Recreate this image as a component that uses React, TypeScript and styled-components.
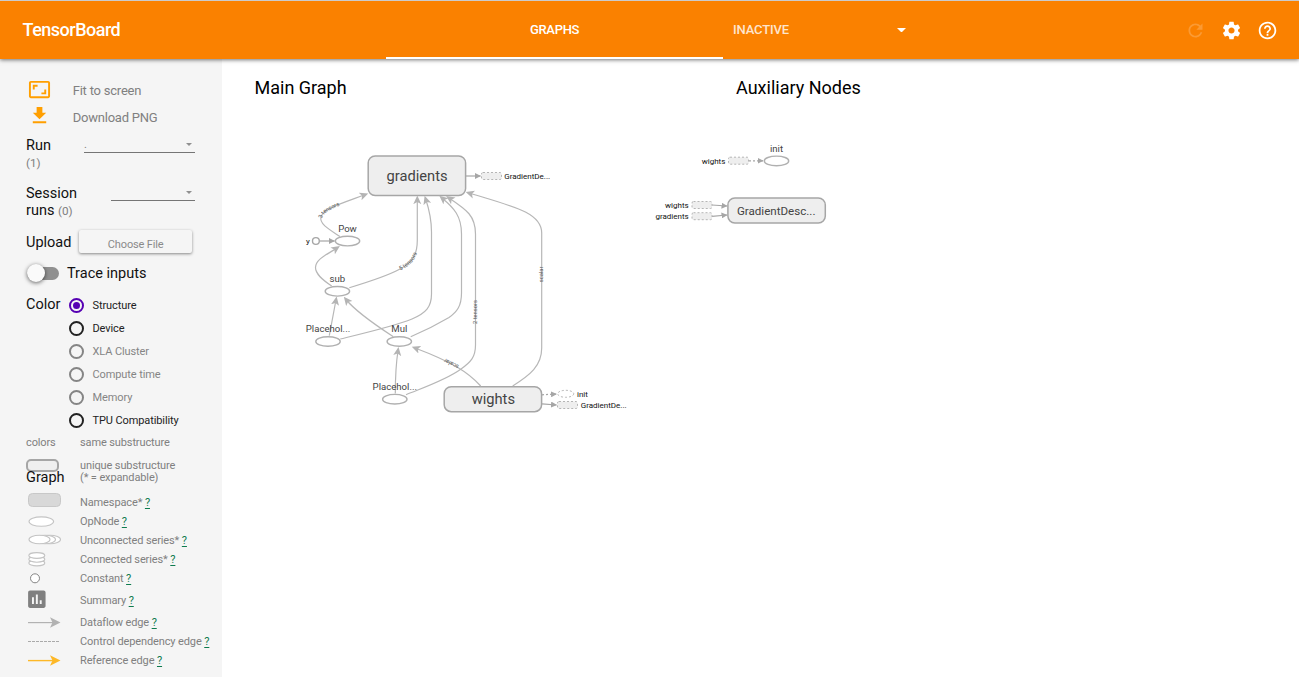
import React from "react";
import styled, { createGlobalStyle } from "styled-components";

const Global = createGlobalStyle`
  * { box-sizing: border-box; }
  body { margin: 0; font-family: Roboto, sans-serif; background: #fff; overflow: hidden; }
`;

const Page = styled.div`
  display: flex;
  flex-direction: column;
  width: 1299px;
  height: 677px;
`;

const Toolbar = styled.header`
  position: relative;
  z-index: 2;
  display: flex;
  flex: none;
  height: 59px;
  border-top: 1px solid #cbcbcb;
  background: #fa8100;
  color: #fff;
  box-shadow: 0 1px 4px rgba(0, 0, 0, 0.55);
`;

const Brand = styled.div`
  width: 386px;
  padding-left: 22.5px;
  font-size: 18px;
  font-weight: 500;
  letter-spacing: -0.5px;
  line-height: 58px;
`;

const Tab = styled.div`
  width: 337px;
  height: 58px;
  border-bottom: 2px solid #fff;
  font-size: 13px;
  font-weight: 500;
  letter-spacing: -0.3px;
  line-height: 58px;
  text-align: center;
`;

const Inactive = styled.div`
  display: flex;
  align-items: center;
  justify-content: space-between;
  width: 173px;
  margin-left: 10px;
  font-size: 13px;
  font-weight: 500;
  letter-spacing: -0.15px;
  & > span { margin-top: -1px; opacity: 0.8; }
`;

const Actions = styled.div`
  display: flex;
  align-items: center;
  gap: 15px;
  margin-left: auto;
  padding-right: 21px;
`;

const Body = styled.div`
  display: flex;
  flex: 1;
  min-height: 0;
`;

const Sidebar = styled.aside`
  flex: none;
  width: 222px;
  padding: 18px 0 0 26px;
  background: #f5f5f5;
  color: #111;
`;

const ActionRow = styled.div`
  display: flex;
  align-items: center;
  height: 27px;
  font-size: 13px;
  letter-spacing: -0.22px;
  color: #808080;
`;

const ActionIcon = styled.span<{ $shift?: number }>`
  display: flex;
  width: 46.7px;
  padding-left: 2px;
  margin-top: ${(p) => p.$shift ?? 0}px;
`;

const Field = styled.div<{ $h: number }>`
  display: flex;
  align-items: flex-start;
  justify-content: space-between;
  height: ${(p) => p.$h}px;
  padding-right: 27px;
  font-size: 14.5px;
`;

const FieldLabel = styled.div`
  padding-top: 6px;
  line-height: 17px;
`;

const Count = styled.span`
  font-size: 11.7px;
  color: #808080;
`;

const Select = styled.div<{ $w: number }>`
  display: flex;
  justify-content: space-between;
  align-items: center;
  width: ${(p) => p.$w}px;
  height: 22px;
  padding: 6px 3px 0 0;
  border-bottom: 1px solid #757575;
  font-size: 11px;
  color: #808080;
`;

const UploadRow = styled.div`
  display: flex;
  align-items: center;
  height: 24px;
  margin-top: 3px;
  font-size: 14.5px;
`;

const FileButton = styled.div`
  width: 113.5px;
  height: 23px;
  margin: -2px 0 0 7.5px;
  border-radius: 2px;
  background: #f5f5f5;
  box-shadow: 0 1px 3px rgba(0, 0, 0, 0.45);
  font-size: 11px;
  letter-spacing: -0.15px;
  line-height: 30px;
  text-align: center;
  color: #8a8a8a;
`;

const ToggleRow = styled.div`
  display: flex;
  align-items: center;
  height: 38px;
  font-size: 14.5px;
`;

const Track = styled.div`
  display: flex;
  align-items: center;
  width: 32px;
  height: 13px;
  margin: 0 8px 0 1px;
  border-radius: 7px;
  background: #909090;
`;

const Knob = styled.div`
  flex: none;
  width: 18px;
  height: 18px;
  border-radius: 50%;
  background: #fafafa;
  box-shadow: 0 1px 4px rgba(0, 0, 0, 0.6);
`;

const ColorRow = styled.div`
  display: flex;
  margin-top: 1px;
  font-size: 14.5px;
`;

const ColorLabel = styled.div`
  width: 43px;
  line-height: 23px;
`;

const Radios = styled.div`
  padding-top: 1px;
`;

const Radio = styled.div<{ $off?: boolean }>`
  display: flex;
  align-items: center;
  gap: 8.5px;
  height: 23px;
  font-size: 11px;
  letter-spacing: -0.1px;
  color: ${(p) => (p.$off ? "#858585" : "#222")};
`;

const Ring = styled.span<{ $on?: boolean }>`
  display: flex;
  align-items: center;
  justify-content: center;
  width: 15px;
  height: 15px;
  border: 2px solid ${(p) => (p.$on ? "#5600b3" : "currentColor")};
  border-radius: 50%;
`;

const Dot = styled.span`
  width: 7px;
  height: 7px;
  border-radius: 50%;
  background: #5600b3;
`;

const Note = styled.div<{ $h: number; $top?: number }>`
  display: flex;
  height: ${(p) => p.$h}px;
  padding-top: ${(p) => p.$top ?? 0}px;
  font-size: 11px;
  letter-spacing: -0.12px;
  line-height: 12px;
  color: #808080;
`;

const Cell = styled.div`
  flex: none;
  width: 54px;
`;

const NoteText = styled.div`
  padding-top: 1px;
`;

const Swatch = styled.div`
  width: 33px;
  height: 13px;
  border: 2px solid #a6a6a6;
  border-radius: 5px;
  background: #efefef;
`;

const GraphHeading = styled.div`
  margin-top: -2px;
  font-size: 14.5px;
  line-height: 16px;
  letter-spacing: 0;
  color: #111;
`;

const LegendRow = styled.div<{ $h: number }>`
  display: flex;
  align-items: center;
  height: ${(p) => p.$h}px;
  font-size: 11px;
  letter-spacing: -0.12px;
  color: #808080;
  white-space: pre;
  & > svg { flex: none; margin-right: 18px; }
`;

const Help = styled.span`
  color: #0d7a4d;
  text-decoration: underline;
  text-underline-offset: 2px;
`;

const Main = styled.main`
  display: flex;
  flex-direction: column;
  flex: 1;
`;

const Titles = styled.div`
  display: flex;
  flex: none;
  height: 59px;
  padding-left: 32.5px;
  font-size: 18px;
  line-height: 58px;
  color: #000;
`;

const Title = styled.div<{ $w?: number }>`
  width: ${(p) => (p.$w ? `${p.$w}px` : "auto")};
`;

const Canvas = styled.svg`
  display: block;
  flex: none;
  font-family: Roboto, sans-serif;
  text { text-anchor: middle; fill: #444; }
  .small { font-size: 8px; fill: #111; text-anchor: start; }
  .end { text-anchor: end; }
  .edgeText { font-size: 5.8px; fill: #555; }
`;

const Caret = ({ w = 9, color = "#fff" }: { w?: number; color?: string }) => (
  <svg width={w} height={w / 2} viewBox="0 0 10 5"><path d="M0 0h10L5 5z" fill={color} /></svg>
);

const Icon = ({ d, size = 22, fill = "#fff", opacity = 1 }: { d: string; size?: number; fill?: string; opacity?: number }) => (
  <svg width={size} height={size} viewBox="0 0 24 24" fill={fill} opacity={opacity}><path d={d} /></svg>
);

const REFRESH = "M17.65 6.35C16.2 4.9 14.21 4 12 4c-4.42 0-7.99 3.58-7.99 8s3.57 8 7.99 8c3.73 0 6.84-2.55 7.73-6h-2.08c-.82 2.33-3.04 4-5.65 4-3.31 0-6-2.69-6-6s2.69-6 6-6c1.66 0 3.14.69 4.22 1.78L13 11h7V4l-2.35 2.35z";
const SETTINGS = "M19.43 12.98c.04-.32.07-.64.07-.98s-.03-.66-.07-.98l2.11-1.65c.19-.15.24-.42.12-.64l-2-3.46c-.12-.22-.39-.3-.61-.22l-2.49 1c-.52-.4-1.08-.73-1.69-.98l-.38-2.65C14.46 2.18 14.25 2 14 2h-4c-.25 0-.46.18-.49.42l-.38 2.65c-.61.25-1.17.59-1.69.98l-2.49-1c-.23-.09-.49 0-.61.22l-2 3.46c-.13.22-.07.49.12.64l2.11 1.65c-.04.32-.07.65-.07.98s.03.66.07.98l-2.11 1.65c-.19.15-.24.42-.12.64l2 3.46c.12.22.39.3.61.22l2.49-1c.52.4 1.08.73 1.69.98l.38 2.65c.03.24.24.42.49.42h4c.25 0 .46-.18.49-.42l.38-2.65c.61-.25 1.17-.59 1.69-.98l2.49 1c.23.09.49 0 .61-.22l2-3.46c.12-.22.07-.49-.12-.64l-2.11-1.65zM12 15.5c-1.93 0-3.5-1.57-3.5-3.5s1.57-3.5 3.5-3.5 3.5 1.57 3.5 3.5-1.57 3.5-3.5 3.5z";
const HELP = "M11 18h2v-2h-2v2zm1-16C6.48 2 2 6.48 2 12s4.48 10 10 10 10-4.48 10-10S17.52 2 12 2zm0 18c-4.41 0-8-3.59-8-8s3.59-8 8-8 8 3.59 8 8-3.59 8-8 8zm0-14c-2.21 0-4 1.79-4 4h2c0-1.1.9-2 2-2s2 .9 2 2c0 2-3 1.75-3 5h2c0-2.25 3-2.5 3-5 0-2.21-1.79-4-4-4z";
const FIT = "M19 12h-2v3h-3v2h5v-5zM7 9h3V7H5v5h2V9zm14-6H3c-1.1 0-2 .9-2 2v14c0 1.1.9 2 2 2h18c1.1 0 2-.9 2-2V5c0-1.1-.9-2-2-2zm0 16.01H3V4.99h18v14.02z";
const DOWNLOAD = "M19 9h-4V3H9v6H5l7 7 7-7zM5 18v2h14v-2H5z";
const SUMMARY = "M19 3H5c-1.1 0-2 .9-2 2v14c0 1.1.9 2 2 2h14c1.1 0 2-.9 2-2V5c0-1.1-.9-2-2-2zM9 17H7v-7h2v7zm4 0h-2V7h2v10zm4 0h-2v-4h2v4z";

const radios = [
  { label: "Structure", on: true },
  { label: "Device" },
  { label: "XLA Cluster", off: true },
  { label: "Compute time", off: true },
  { label: "Memory", off: true },
  { label: "TPU Compatibility" },
];

const legendStroke = { fill: "#fff", stroke: "#c4c4c4", strokeWidth: 1.1 };

const legend: { h: number; label: string; art: React.ReactNode }[] = [
  { h: 19, label: "Namespace*", art: <rect x="2.5" y="0.5" width="32" height="13" rx="4" fill="#d8d8d8" stroke="#c8c8c8" /> },
  { h: 19, label: "OpNode", art: <ellipse cx="15.3" cy="9.6" rx="12.3" ry="4.7" {...legendStroke} /> },
  { h: 19, label: "Unconnected series*", art: <g {...legendStroke}><ellipse cx="24" cy="8.5" rx="10.5" ry="4.2" /><ellipse cx="19" cy="8.5" rx="10.5" ry="4.2" /><ellipse cx="13.5" cy="8.5" rx="10.5" ry="4.2" /></g> },
  { h: 19, label: "Connected series*", art: <g {...legendStroke}><ellipse cx="10.8" cy="13" rx="8" ry="2.9" /><ellipse cx="10.8" cy="9.3" rx="8" ry="2.9" /><ellipse cx="10.8" cy="5.5" rx="8" ry="2.9" /></g> },
  { h: 19, label: "Constant", art: <circle cx="9" cy="9.3" r="4.5" fill="#fff" stroke="#858585" /> },
  { h: 25, label: "Summary", art: <path transform="translate(-.8 -3.4) scale(.97)" fill="#808080" d={SUMMARY} /> },
  { h: 19, label: "Dataflow edge", art: <g fill="#b2b2b2"><path d="M2 9h26v1.2H2z" /><path d="M34.5 9.5l-10.5-5.3 2.5 5.3-2.5 5.3z" /></g> },
  { h: 19, label: "Control dependency edge", art: <path d="M2 9.5h32" stroke="#aaa" strokeDasharray="3 1" /> },
  { h: 19, label: "Reference edge", art: <g fill="#fdb827"><path d="M2 8.9h26v1.4H2z" /><path d="M34.5 9.5l-10.5-5.3 2.5 5.3-2.5 5.3z" /></g> },
];

const edges: { d: string; text?: string; at?: string }[] = [
  { d: "M340 236.5C330 230 319 224 321 217C323 209 337 205 365 194.7", text: "3 tensors", at: "50%" },
  { d: "M331.7 286C322 279.5 315.5 274 315.5 267.5C315.5 259 328 254 337 248" },
  { d: "M349.3 287.7C370 281.5 389 275 400 269C413 262.5 417.3 254 417.3 240V199", text: "5 tensors", at: "50%" },
  { d: "M340.3 339C365 333 395 326 412 319C426 313 431.5 307 431.5 294V232C431.5 219 429 209 425.7 199" },
  { d: "M410.7 336.7C422 332 438 324 449 317.5C457 312 461.5 306 461.5 293V234C461.5 216 454 208 442 198" },
  { d: "M406 394.7C425 387 446 380 460.7 369.3C471 362 475.5 357 475.5 345V234C475.5 216 467 210 449 198" },
  { d: "M512.7 386C530 375 541.7 366 541.7 348V233C541.7 212 511 206 469 193" },
  { d: "M480.7 386C468 372 452 362 415 348" },
  { d: "M395.3 393.5C395.3 378 396 364 398 350.5" },
  { d: "M329.3 335.7L336 300" },
  { d: "M393.3 336.7C380 328 357 313 346 299.5" },
];

const opNodes = [
  { x: 347.5, y: 241.1, label: "Pow" },
  { x: 337.4, y: 291.3, label: "sub" },
  { x: 328, y: 341.5, label: "Placehol..." },
  { x: 399.3, y: 341.5, label: "Mul" },
  { x: 394.8, y: 399.2, label: "Placehol..." },
  { x: 776.5, y: 160.9, label: "init" },
];

const groups = [
  { x: 368.2, y: 156, w: 97.4, h: 39.5, label: "gradients", size: 14.7, tx: 417, ty: 181 },
  { x: 444.2, y: 386.7, w: 97.4, h: 25, label: "wights", size: 14.7, tx: 493.3, ty: 404 },
  { x: 727.9, y: 198, w: 97.4, h: 25, label: "GradientDesc...", size: 11.6, tx: 776.2, ty: 215 },
];

const stubs = [
  { x: 481.5, y: 172.5 },
  { x: 557.5, y: 401.5 },
  { x: 728.5, y: 157.2 },
  { x: 692, y: 201.5 },
  { x: 692, y: 212.7 },
];

const links = [
  { d: "M466 176H480.5" },
  { d: "M542 394.8L556.5 394", dash: true },
  { d: "M542 403.8L556.5 405" },
  { d: "M749 160.8H763", dash: true },
  { d: "M712 205L727 206" },
  { d: "M712 216.3L727 215" },
  { d: "M320 241H334.5" },
];

const Graph = () => (
  <Canvas width="1077" height="559" viewBox="222 118 1077 559">
    <defs>
      <marker id="arrow" markerUnits="userSpaceOnUse" markerWidth="9.2" markerHeight="9.2" viewBox="0 0 8 8" refX="4.5" refY="4" orient="auto">
        <path d="M0 .5L7.5 4L0 7.5L1.8 4z" fill="#b4b4b4" />
      </marker>
      <marker id="tip" markerUnits="userSpaceOnUse" markerWidth="7" markerHeight="6" refX="5.5" refY="3" orient="auto">
        <path d="M0 0L6 3L0 6z" fill="#a6a6a6" />
      </marker>
    </defs>
    {groups.map((g) => (
      <g key={g.label}>
        <rect x={g.x} y={g.y} width={g.w} height={g.h} rx="7" fill="#eee" stroke="#a6a6a6" strokeWidth="1.5" />
        <text x={g.tx} y={g.ty} fontSize={g.size}>{g.label}</text>
      </g>
    ))}
    {edges.map((e, i) => (
      <g key={i}>
        <path id={`edge${i}`} d={e.d} fill="none" stroke="#b7b7b7" strokeWidth="1.2" markerEnd="url(#arrow)" />
        {e.text && (
          <text className="edgeText" dy="1.5"><textPath href={`#edge${i}`} startOffset={e.at}>{e.text}</textPath></text>
        )}
      </g>
    ))}
    <text className="edgeText" transform="translate(477.3 312) rotate(-90)">2 tensors</text>
    <text className="edgeText" transform="translate(543.2 274.5) rotate(-90)">scalar</text>
    <text className="edgeText" transform="translate(452.3 362) rotate(207)">scalar</text>
    {links.map((l) => (
      <path key={l.d} d={l.d} stroke="#a6a6a6" strokeWidth="1.2" strokeDasharray={l.dash ? "2 2" : undefined} markerEnd="url(#tip)" />
    ))}
    {stubs.map((s) => (
      <rect key={`${s.x}-${s.y}`} x={s.x} y={s.y} width="20" height="7" rx="1.5" fill="#eee" stroke="#b5b5b5" strokeDasharray="2 2" />
    ))}
    {opNodes.map((n) => (
      <g key={`${n.x}`}>
        <ellipse cx={n.x} cy={n.y} rx="12.2" ry="4.8" fill="#fff" stroke="#b0b0b0" strokeWidth="1.4" />
        <text x={n.x} y={Math.round(n.y - 9.3)} fontSize="9.6">{n.label}</text>
      </g>
    ))}
    <circle cx="315.9" cy="241" r="3.4" fill="#fff" stroke="#a6a6a6" strokeWidth="1.4" />
    <ellipse cx="565.7" cy="393.8" rx="8" ry="3.5" fill="#fff" stroke="#b5b5b5" strokeDasharray="2 2" />
    <text className="small end" x="309.7" y="244">y</text>
    <text className="small" x="504.2" y="179">GradientDe...</text>
    <text className="small" x="577" y="397">init</text>
    <text className="small" x="580.7" y="408">GradientDe...</text>
    <text className="small end" x="725.3" y="164">wights</text>
    <text className="small end" x="688.7" y="208">wights</text>
    <text className="small end" x="688.7" y="219">gradients</text>
  </Canvas>
);

export default function App() {
  return (
    <Page>
      <Global />
      <Toolbar>
        <Brand>TensorBoard</Brand>
        <Tab>GRAPHS</Tab>
        <Inactive><span>INACTIVE</span><Caret /></Inactive>
        <Actions>
          <Icon d={REFRESH} size={21} opacity={0.2} />
          <Icon d={SETTINGS} size={21} />
          <Icon d={HELP} size={21} />
        </Actions>
      </Toolbar>
      <Body>
        <Sidebar>
          <ActionRow><ActionIcon $shift={-3}><Icon d={FIT} fill="#ff9f00" size={23} /></ActionIcon>Fit to screen</ActionRow>
          <ActionRow><ActionIcon $shift={-4}><Icon d={DOWNLOAD} fill="#ff9f00" size={23} /></ActionIcon>Download PNG</ActionRow>
          <Field $h={48}>
            <FieldLabel>Run<br /><Count>(1)</Count></FieldLabel>
            <Select $w={111}><span>.</span><Caret w={6} color="#909090" /></Select>
          </Field>
          <Field $h={48}>
            <FieldLabel>Session<br />runs <Count>(0)</Count></FieldLabel>
            <Select $w={84}><span /><Caret w={6} color="#909090" /></Select>
          </Field>
          <UploadRow>Upload<FileButton>Choose File</FileButton></UploadRow>
          <ToggleRow><Track><Knob /></Track>Trace inputs</ToggleRow>
          <ColorRow>
            <ColorLabel>Color</ColorLabel>
            <Radios>
              {radios.map((r) => (
                <Radio key={r.label} $off={r.off}><Ring $on={r.on}>{r.on && <Dot />}</Ring>{r.label}</Radio>
              ))}
            </Radios>
          </ColorRow>
          <Note $h={27} $top={5}><Cell>colors</Cell><div>same substructure</div></Note>
          <Note $h={34}>
            <Cell><Swatch /><GraphHeading>Graph</GraphHeading></Cell>
            <NoteText>unique substructure<br />(* = expandable)</NoteText>
          </Note>
          {legend.map((l) => (
            <LegendRow key={l.label} $h={l.h}>
              <svg width="36" height="19" viewBox="0 0 36 19" overflow="visible">{l.art}</svg>
              {l.label} <Help>?</Help>
            </LegendRow>
          ))}
        </Sidebar>
        <Main>
          <Titles><Title $w={481.5}>Main Graph</Title><Title>Auxiliary Nodes</Title></Titles>
          <Graph />
        </Main>
      </Body>
    </Page>
  );
}
